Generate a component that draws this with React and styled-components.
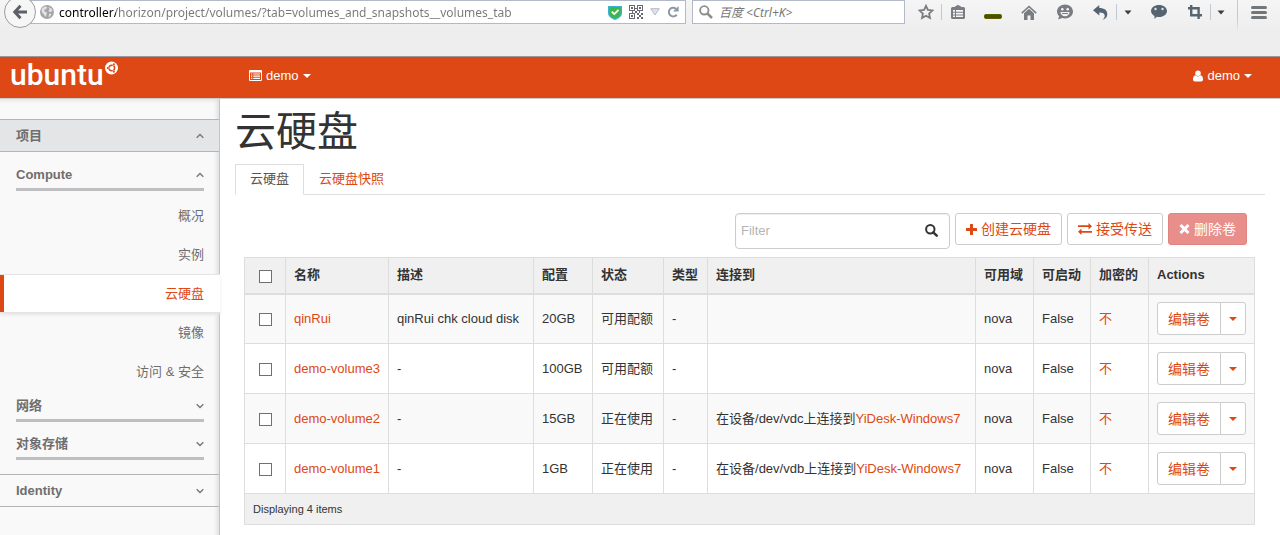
import React, { useState } from 'react';
import styled, { createGlobalStyle, css } from 'styled-components';

const GlobalStyle = createGlobalStyle`
  * {
    box-sizing: border-box;
  }
  body {
    margin: 0;
    background: #fff;
    color: #333;
    font-family: 'Liberation Sans', 'Noto Sans CJK SC', sans-serif;
    font-size: 13px;
    line-height: 18px;
  }
  a {
    color: #dd4814;
    text-decoration: none;
  }
  button,
  input {
    font-family: inherit;
  }
  svg {
    display: block;
    flex: none;
  }
`;

/* Browser bar */
const Chrome = styled.div`
  height: 57px;
  overflow: hidden;
  background: linear-gradient(#f5f5f5, #eeeeee 30px);
  border-bottom: 1px solid #9a9a9a;
`;
const NavBar = styled.div`
  display: flex;
  align-items: center;
  height: 24px;
  padding-left: 4px;
`;
const BackButton = styled.button`
  display: flex;
  align-items: center;
  justify-content: center;
  width: 32px;
  height: 32px;
  flex: none;
  padding: 0;
  border: 1px solid #9a9c9f;
  border-radius: 50%;
  background: #f6f6f6;
  z-index: 1;
`;
const Field = styled.div`
  display: flex;
  align-items: center;
  height: 24px;
  background: #fff;
  border: 1px solid #b1bac6;
`;
const UrlField = styled(Field)`
  flex: 1;
  gap: 5px;
  margin-left: -8px;
  margin-right: 6px;
  padding: 0 6px 0 11px;
`;
const UrlInput = styled.input`
  flex: 1;
  min-width: 0;
  padding: 2px 0 0;
  border: none;
  outline: none;
  font-family: 'Noto Sans', 'Open Sans', sans-serif;
  font-size: 12px;
  line-height: 20px;
  color: transparent;
  caret-color: #000;
  background: linear-gradient(90deg, #000 57px, #777 57px);
  background-clip: text;
`;
const UrlIcons = styled.div`
  display: flex;
  align-items: center;
  gap: 7px;
`;
const SearchField = styled(Field)`
  width: 213px;
  gap: 6px;
  padding: 0 6px;
`;
const SearchInput = styled.input`
  flex: 1;
  min-width: 0;
  padding: 2px 0 0;
  border: none;
  outline: none;
  background: none;
  font-family: 'Noto Sans', 'Noto Sans CJK SC', sans-serif;
  font-size: 12px;
  line-height: 20px;
  &::placeholder {
    color: #777;
    font-style: italic;
    opacity: 1;
  }
`;
const Tools = styled.div`
  display: flex;
  align-items: center;
  margin-left: 5px;
`;
const ToolButton = styled.button`
  display: flex;
  align-items: center;
  justify-content: center;
  width: ${p => p.$w}px;
  height: 24px;
  padding: 0;
  border: none;
  background: none;
`;
const Separator = styled.span`
  width: 1px;
  height: 16px;
  background: #c3c9d1;
`;
const MenuSeparator = styled.span`
  width: 1px;
  height: 40px;
  margin-left: 6px;
  background: linear-gradient(#c9c9c9 70%, transparent);
`;

/* Dashboard header */
const TopBar = styled.header`
  display: flex;
  align-items: center;
  height: 42px;
  padding: 0 28px 4px 10px;
  background: #dd4814;
  border-bottom: 1px solid #ccc;
  color: #fff;
`;
const Brand = styled.a`
  display: flex;
  align-items: flex-start;
  width: 239px;
  padding: 2px 0 4px;
  color: #fff;
  font-family: Roboto, sans-serif;
  font-size: 30px;
  font-weight: 500;
  line-height: 28px;
`;
const TopMenu = styled.button`
  display: flex;
  align-items: center;
  gap: 4px;
  padding: 0;
  border: none;
  background: none;
  color: #fff;
  font-size: 13px;
  line-height: 18px;
  margin-left: ${p => (p.$right ? 'auto' : '0')};
`;
const Caret = styled.span`
  border: 4px solid transparent;
  border-top-color: currentColor;
  border-bottom: none;
`;

/* Sidebar */
const Body = styled.div`
  display: flex;
`;
const Sidebar = styled.nav`
  width: 220px;
  min-height: calc(100vh - 99px);
  flex: none;
  padding-top: 20px;
  background: #f9f9f9;
  border-right: 1px solid #c4c4c4;
  box-shadow: inset -4px 3px 4px -2px #ddd;
  color: #6e6e6e;
`;
const PanelHead = styled.button`
  display: flex;
  align-items: center;
  justify-content: space-between;
  width: 100%;
  height: 33px;
  padding: 0 15px 0 16px;
  border: solid #b5b5b5;
  border-width: 1px 0;
  background: ${p => (p.$open ? '#e3e5e6' : 'transparent')};
  color: #6e6e6e;
  font-size: 13px;
  font-weight: bold;
  line-height: 18px;
`;
const PanelBody = styled.div`
  padding: 8px 0 14px;
`;
const GroupHead = styled.button`
  display: flex;
  align-items: center;
  justify-content: space-between;
  width: calc(100% - 31px);
  height: 31px;
  margin: ${p => (p.$spaced ? '7px' : '0')} 15px 0 16px;
  padding: 2px 0 0;
  border: none;
  border-bottom: 3px solid #bfbfc1;
  background: none;
  color: #6e6e6e;
  font-size: 13px;
  font-weight: bold;
  line-height: 18px;
`;
const Items = styled.div`
  padding-top: 5px;
`;
const Item = styled.a`
  display: flex;
  align-items: center;
  justify-content: flex-end;
  height: 39px;
  padding-right: 15px;
  color: #6e6e6e;
  ${p =>
    p.$active &&
    css`
      width: 220px;
      padding-right: 16px;
      background: #fff;
      color: #dd4814;
      border: solid #e4e4e4;
      border-width: 1px 0;
      box-shadow: inset 4px 0 #dd4814, 0 2px 3px #e6e6e6;
      position: relative;
    `}
`;

/* Main */
const Main = styled.main`
  flex: 1;
  min-width: 0;
  padding: 0 15px;
`;
const Title = styled.h1`
  margin: 8px 0 7px;
  font-size: 41px;
  font-weight: normal;
  line-height: 50px;
`;
const Tabs = styled.div`
  display: flex;
  height: 31px;
  border-bottom: 1px solid #ddd;
`;
const Tab = styled.a`
  height: 31px;
  padding: 5px 14px;
  border: 1px solid transparent;
  ${p =>
    p.$active &&
    css`
      color: #555;
      background: #fff;
      border-color: #ddd #ddd #fff;
    `}
`;
const Actions = styled.div`
  display: flex;
  justify-content: flex-end;
  align-items: flex-start;
  gap: 5px;
  margin: 18px 18px 8px 0;
`;
const FilterBox = styled.div`
  display: flex;
  align-items: center;
  width: 215px;
  height: 36px;
  padding: 0 11px 2px 5px;
  border: 1px solid #ccc;
  border-radius: 4px;
  box-shadow: inset 0 1px 1px #eee;
`;
const FilterInput = styled.input`
  flex: 1;
  min-width: 0;
  padding: 0;
  border: none;
  outline: none;
  background: none;
  font-size: 13px;
  &::placeholder {
    color: #b5b5b5;
    opacity: 1;
  }
`;
const IconButton = styled.button`
  display: flex;
  align-items: center;
  padding: 0;
  border: none;
  background: none;
`;
const Button = styled.button`
  display: flex;
  align-items: center;
  gap: 4px;
  height: 32px;
  padding: 0 10px;
  border: 1px solid ${p => (p.$danger ? '#e08481' : '#ccc')};
  border-radius: 3px;
  background: ${p => (p.$danger ? '#e88f8c' : '#fff')};
  color: ${p => (p.$danger ? '#fff' : '#dd4814')};
  font-size: 14px;
  line-height: 20px;
  white-space: nowrap;
`;
const TableWrap = styled.div`
  padding: 0 10px 0 9px;
`;
const Table = styled.table`
  width: 100%;
  table-layout: fixed;
  border-collapse: collapse;
  td,
  th {
    border: 1px solid #ddd;
    padding: 0 8px;
    text-align: left;
    white-space: nowrap;
  }
  th {
    height: 36px;
    background: #f0f0f0;
    border-bottom-width: 2px;
  }
  td {
    height: 50px;
  }
  tbody tr:nth-child(odd) {
    background: #f9f9f9;
  }
  tfoot td {
    height: 31px;
    background: #f0f0f0;
    font-size: 11px;
  }
`;
const Check = styled.input`
  appearance: none;
  display: block;
  width: 13px;
  height: 13px;
  margin: 2px 0 0 6px;
  border: 1px solid #707070;
  background: #fff;
  &:checked {
    background: #dd4814;
  }
`;
const SplitButton = styled.div`
  display: flex;
`;
const EditButton = styled(Button)`
  height: 33px;
  border-radius: 3px 0 0 3px;
`;
const ToggleButton = styled(Button)`
  height: 33px;
  margin-left: -1px;
  padding: 0 8px;
  border-radius: 0 3px 3px 0;
`;

const Chevron = ({ up }) => (
  <svg width="8" height="6" viewBox="0 0 8 6" fill="none" stroke="#777" strokeWidth="1.4">
    <path d={up ? 'M.7 4.7 4 1.4l3.3 3.3' : 'M.7 1.2 4 4.5l3.3-3.3'} />
  </svg>
);

const BackIcon = () => (
  <svg width="16" height="16" viewBox="0 0 16 16" fill="none" stroke="#5d6166" strokeWidth="3">
    <path d="M8.5 1.8 2.8 8l5.7 6.2M3 8h12" />
  </svg>
);

const GlobeIcon = () => (
  <svg width="14" height="14" viewBox="0 0 14 14">
    <circle cx="7" cy="7" r="7" fill="#a3a5a8" />
    <path d="M1.5 4 5 1.3l2.3 1L6 4.2 4 5l.7 1.5 2.3 1-.6 2.6L5.2 12 4 9.5 2 7.6zM8.5 2l3 1.6 1.2 3-1.6-.4-1 1.2-1.8-1.8 1.3-1.2zM9 9l2.6-.4-1.4 2.8L8.6 12z" fill="#e2e3e4" />
  </svg>
);

const ShieldIcon = () => (
  <svg width="14" height="15" viewBox="0 0 14 15">
    <path d="M0 1h14v7c0 3.5-3.5 5.7-7 7-3.5-1.3-7-3.5-7-7z" fill="#38b4d0" />
    <path d="M1.300 2h11.400v6c0 2.700-2.700 4.600-5.700 5.700C4 12.600 1.300 10.700 1.300 8z" fill="#3fb54a" />
    <path d="m3.800 6.600 2.500 2.500 4.200-4.200" fill="none" stroke="#fff" strokeWidth="1.8" />
  </svg>
);

const QrIcon = () => (
  <svg width="14" height="14" viewBox="0 0 14 14" fill="#666a70">
    <path fillRule="evenodd" d="M0 0h6v6H0zM1 1v4h4V1zM8 0h6v6H8zM9 1v4h4V1zM0 8h6v6H0zM1 9v4h4V9z" />
    <path d="M2 2h2v2H2zM10 2h2v2h-2zM2 10h2v2H2zM6 3h2v1H6zM6 6h2v2H6zM8 8h2v2H8zM10 10h2v2h-2zM12 8h2v2h-2zM8 12h2v2H8zM12 12h2v2h-2zM3 6h1v2H3zM10 6h1v2h-1z" />
  </svg>
);

const TriangleIcon = () => (
  <svg width="10" height="8" viewBox="0 0 10 8">
    <path d="M.7.7h8.600L5 7z" fill="#dfe3e9" stroke="#b4bbc6" />
  </svg>
);

const ReloadIcon = () => (
  <svg width="12" height="12" viewBox="0 0 12 12">
    <path d="M9.700 8.600A4.300 4.300 0 1 1 9 2.900" fill="none" stroke="#8d98a7" strokeWidth="2" />
    <path d="M11.600 0v5.600H6z" fill="#8d98a7" />
  </svg>
);

const MagnifierIcon = () => (
  <svg width="14" height="14" viewBox="0 0 14 14" fill="none" stroke="#8f8f8f">
    <circle cx="5.300" cy="5.300" r="4.200" strokeWidth="1.9" />
    <path d="m8.300 8.300 4.700 4.700" strokeWidth="2.6" />
  </svg>
);

const StarIcon = () => (
  <svg width="16" height="16" viewBox="0 0 16 16" fill="none" stroke="#797d82" strokeWidth="1.8">
    <path d="m8 1.800 1.900 4.100 4.600.5-3.400 3.100.9 4.600L8 11.800l-4 2.300.9-4.600L1.500 6.400l4.600-.5z" />
  </svg>
);

const ClipboardIcon = () => (
  <svg width="14" height="15" viewBox="0 0 14 15">
    <path d="M1.500 2H4q.3-1.200 1.500-1.200Q6 0 7 0t1.500.8Q9.700.8 10 2h2.500Q14 2 14 3.500v9q0 1.500-1.500 1.500h-11Q0 14 0 12.500v-9Q0 2 1.500 2z" fill="#797d82" />
    <path d="M2 5h2v1.800H2zM5 5h7v1.800H5zM2 7.800h2v1.600H2zM5 7.800h7v1.600H5zM2 10.400h2V12H2zM5 10.400h7V12H5z" fill="#f6f6f6" />
  </svg>
);

const DashIcon = () => (
  <svg width="18" height="14" viewBox="0 0 18 14">
    <rect x=".5" y="9.500" width="17" height="4" rx="1.200" fill="#4c5000" stroke="#5d6500" />
  </svg>
);

const HomeIcon = () => (
  <svg width="16" height="15" viewBox="0 0 16 15">
    <path d="M.8 8.200 8 1.500l7.200 6.700" fill="none" stroke="#797d82" strokeWidth="1.6" />
    <path d="M3 8.300 8 3.800l5 4.500V15H9.500v-4.500h-3V15H3z" fill="#797d82" />
  </svg>
);

const SmileIcon = () => (
  <svg width="16" height="16" viewBox="0 0 16 16">
    <path d="M8 .5c4.400 0 8 3 8 7s-3.600 7-8 7c-1 0-2-.2-2.800-.5L1 15.500l1.200-3.300C.8 11 0 9.400 0 7.500c0-4 3.600-7 8-7z" fill="#797d82" />
    <circle cx="5.300" cy="5.300" r="1.300" fill="#f3f3f3" />
    <circle cx="10.700" cy="5.300" r="1.300" fill="#f3f3f3" />
    <path d="M3.500 8h9c0 2.500-2 4.200-4.500 4.200S3.500 10.500 3.500 8z" fill="#f3f3f3" />
    <path d="M5 9.500h6" stroke="#797d82" />
  </svg>
);

const UndoIcon = () => (
  <svg width="15" height="15" viewBox="0 0 15 15">
    <path d="M0 5.200 6.300 0v3c5 0 8 2.200 8 6.200 0 2.800-1.800 4.700-4.800 5.600 1.500-1.200 2.200-2.300 2.200-4 0-2.300-1.700-3.400-5.400-3.400v3.200z" fill="#566472" />
  </svg>
);

const ChatIcon = () => (
  <svg width="16" height="14" viewBox="0 0 16 14">
    <path d="M8 0c4.400 0 8 2.600 8 6s-3.600 6-8 6c-.8 0-1.500-.1-2.200-.2L3.500 14v-3.100C1.400 9.800 0 8.100 0 6c0-3.400 3.600-6 8-6z" fill="#566472" />
    <circle cx="4.500" cy="4" r="1.200" fill="#dfe5ea" />
    <circle cx="11.500" cy="4" r="1.200" fill="#dfe5ea" />
  </svg>
);

const CropIcon = () => (
  <svg width="14" height="14" viewBox="0 0 14 14" fill="none" stroke="#566472" strokeWidth="2.4">
    <path d="M3.200 0v10.300H14M0 3.200h10.600V14" />
  </svg>
);

const ToolCaret = () => (
  <svg width="8" height="5" viewBox="0 0 8 5">
    <path d="M.5.5h7L4 4.500z" fill="#3c3c3c" />
  </svg>
);

const MenuIcon = () => (
  <svg width="16" height="13" viewBox="0 0 16 13" stroke="#72777c" strokeWidth="3" strokeLinecap="round">
    <path d="M1.500 1.500h13M1.500 6.500h13M1.500 11.500h13" />
  </svg>
);

const CircleOfFriends = () => (
  <svg width="14" height="14" viewBox="0 0 14 14">
    <circle cx="7.500" cy="7" r="6.500" fill="#fff" />
    <circle cx="7.800" cy="7" r="2.800" fill="none" stroke="#dd4814" strokeWidth="1.5" />
    <path d="M7.800 7H3M7.800 7l2.500-4.600M7.800 7l2.500 4.600" stroke="#fff" strokeWidth=".8" />
    <circle cx="3.700" cy="7" r="1" fill="#dd4814" />
    <circle cx="9.900" cy="3.300" r="1" fill="#dd4814" />
    <circle cx="9.900" cy="10.700" r="1" fill="#dd4814" />
  </svg>
);

const ListIcon = () => (
  <svg width="13" height="11" viewBox="0 0 13 11">
    <path fillRule="evenodd" d="M1 0h11q1 0 1 1v9q0 1-1 1H1q-1 0-1-1V1q0-1 1-1zm0 2.500v7.500h11V2.500z" fill="#fff" />
    <path d="M2 4h1.300M4.300 4H11M2 6.200h1.300M4.300 6.200H11M2 8.400h1.300M4.300 8.400H11" stroke="#fff" strokeWidth="1.2" />
  </svg>
);

const UserIcon = () => (
  <svg width="10" height="12" viewBox="0 0 11 12" fill="#fff">
    <circle cx="5.500" cy="3" r="3" />
    <path d="M2.600 5.300c1.600 1.600 4.200 1.600 5.800 0C10.300 5.600 11 7.600 11 9.800c0 1.300-.8 2.200-2 2.200H2c-1.200 0-2-.9-2-2.200 0-2.200.7-4.200 2.600-4.500z" />
  </svg>
);

const SearchIcon = () => (
  <svg width="13" height="13" viewBox="0 0 13 13" fill="none" stroke="#333">
    <circle cx="5.300" cy="5.300" r="4.200" strokeWidth="2" />
    <path d="m8.300 8.300 3.400 3.400" strokeWidth="2.4" strokeLinecap="round" />
  </svg>
);

const PlusIcon = () => (
  <svg width="11" height="11" viewBox="0 0 11 11" fill="#dd4814">
    <path d="M4 .5q0-.5.5-.5h2q.5 0 .5.5V4h3.500q.5 0 .5.5v2q0 .5-.5.500H7v3.500q0 .5-.5.500h-2q-.5 0-.5-.5V7H.5Q0 7 0 6.500v-2Q0 4 .5 4H4z" />
  </svg>
);

const ExchangeIcon = () => (
  <svg width="14" height="12" viewBox="0 0 14 12" fill="#dd4814">
    <path d="M0 2.300h10.500V0L14 3.200l-3.500 3.200V4.100H0zM14 9.700H3.500V12L0 8.800l3.500-3.200v2.300H14z" />
  </svg>
);

const TimesIcon = () => (
  <svg width="11" height="10" viewBox="0 0 11 10" stroke="#fff" strokeWidth="3">
    <path d="m1.500 1 8 8M9.500 1l-8 8" />
  </svg>
);

const volumes = [
  { name: 'qinRui', description: 'qinRui chk cloud disk', size: '20GB', status: '可用配额' },
  { name: 'demo-volume3', description: '-', size: '100GB', status: '可用配额' },
  { name: 'demo-volume2', description: '-', size: '15GB', status: '正在使用', device: '/dev/vdc' },
  { name: 'demo-volume1', description: '-', size: '1GB', status: '正在使用', device: '/dev/vdb' },
];

const columnWidths = [41, 103, 145, 59, 71, 44, null, 58, 57, 58, 106];
const headings = ['名称', '描述', '配置', '状态', '类型', '连接到', '可用域', '可启动', '加密的', 'Actions'];
const computeItems = ['概况', '实例', '云硬盘', '镜像', '访问 & 安全'];

function BrowserBar() {
  const [url, setUrl] = useState('controller/horizon/project/volumes/?tab=volumes_and_snapshots__volumes_tab');

  return (
    <Chrome>
      <NavBar>
        <BackButton aria-label="Back"><BackIcon /></BackButton>
        <UrlField>
          <GlobeIcon />
          <UrlInput aria-label="Address" value={url} onChange={e => setUrl(e.target.value)} />
          <UrlIcons>
            <ShieldIcon />
            <QrIcon />
            <TriangleIcon />
            <ReloadIcon />
          </UrlIcons>
        </UrlField>
        <SearchField>
          <MagnifierIcon />
          <SearchInput aria-label="Search" placeholder="百度 <Ctrl+K>" />
        </SearchField>
        <Tools>
          <ToolButton $w={31} aria-label="Bookmark"><StarIcon /></ToolButton>
          <Separator />
          <ToolButton $w={31} aria-label="Bookmarks list"><ClipboardIcon /></ToolButton>
          <ToolButton $w={40} aria-label="Add-on"><DashIcon /></ToolButton>
          <ToolButton $w={32} aria-label="Home"><HomeIcon /></ToolButton>
          <ToolButton $w={40} aria-label="Chat"><SmileIcon /></ToolButton>
          <ToolButton $w={31} aria-label="Undo"><UndoIcon /></ToolButton>
          <Separator />
          <ToolButton $w={22} aria-label="Undo options"><ToolCaret /></ToolButton>
          <ToolButton $w={40} aria-label="Messages"><ChatIcon /></ToolButton>
          <ToolButton $w={31} aria-label="Screenshot"><CropIcon /></ToolButton>
          <Separator />
          <ToolButton $w={20} aria-label="Screenshot options"><ToolCaret /></ToolButton>
          <MenuSeparator />
          <ToolButton $w={42} aria-label="Menu"><MenuIcon /></ToolButton>
        </Tools>
      </NavBar>
    </Chrome>
  );
}

function SideNav() {
  return (
    <Sidebar>
      <PanelHead $open>项目<Chevron up /></PanelHead>
      <PanelBody>
        <GroupHead>Compute<Chevron up /></GroupHead>
        <Items>
          {computeItems.map(item => (
            <Item key={item} href="#" $active={item === '云硬盘'}>{item}</Item>
          ))}
        </Items>
        <GroupHead>网络<Chevron /></GroupHead>
        <GroupHead $spaced>对象存储<Chevron /></GroupHead>
      </PanelBody>
      <PanelHead>Identity<Chevron /></PanelHead>
    </Sidebar>
  );
}

function VolumeTable() {
  return (
    <Table>
      <colgroup>
        {columnWidths.map((width, i) => (
          <col key={i} width={width || undefined} />
        ))}
      </colgroup>
      <thead>
        <tr>
          <th><Check type="checkbox" aria-label="Select all" /></th>
          {headings.map(heading => <th key={heading}>{heading}</th>)}
        </tr>
      </thead>
      <tbody>
        {volumes.map(volume => (
          <tr key={volume.name}>
            <td><Check type="checkbox" aria-label={volume.name} /></td>
            <td><a href="#">{volume.name}</a></td>
            <td>{volume.description}</td>
            <td>{volume.size}</td>
            <td>{volume.status}</td>
            <td>-</td>
            <td>
              {volume.device && <>在设备{volume.device}上连接到<a href="#">YiDesk-Windows7</a></>}
            </td>
            <td>nova</td>
            <td>False</td>
            <td><a href="#">不</a></td>
            <td>
              <SplitButton>
                <EditButton>编辑卷</EditButton>
                <ToggleButton aria-label="More actions"><Caret /></ToggleButton>
              </SplitButton>
            </td>
          </tr>
        ))}
      </tbody>
      <tfoot>
        <tr>
          <td colSpan={11}>Displaying 4 items</td>
        </tr>
      </tfoot>
    </Table>
  );
}

function App() {
  const [filter, setFilter] = useState('');

  return (
    <>
      <GlobalStyle />
      <BrowserBar />
      <TopBar>
        <Brand href="#">ubuntu<CircleOfFriends /></Brand>
        <TopMenu><ListIcon />demo<Caret /></TopMenu>
        <TopMenu $right><UserIcon />demo<Caret /></TopMenu>
      </TopBar>
      <Body>
        <SideNav />
        <Main>
          <Title>云硬盘</Title>
          <Tabs>
            <Tab href="#" $active>云硬盘</Tab>
            <Tab href="#">云硬盘快照</Tab>
          </Tabs>
          <Actions>
            <FilterBox>
              <FilterInput
                aria-label="Filter"
                placeholder="Filter"
                value={filter}
                onChange={e => setFilter(e.target.value)}
              />
              <IconButton aria-label="Search volumes"><SearchIcon /></IconButton>
            </FilterBox>
            <Button><PlusIcon />创建云硬盘</Button>
            <Button><ExchangeIcon />接受传送</Button>
            <Button $danger><TimesIcon />删除卷</Button>
          </Actions>
          <TableWrap>
            <VolumeTable />
          </TableWrap>
        </Main>
      </Body>
    </>
  );
}

export default App;
